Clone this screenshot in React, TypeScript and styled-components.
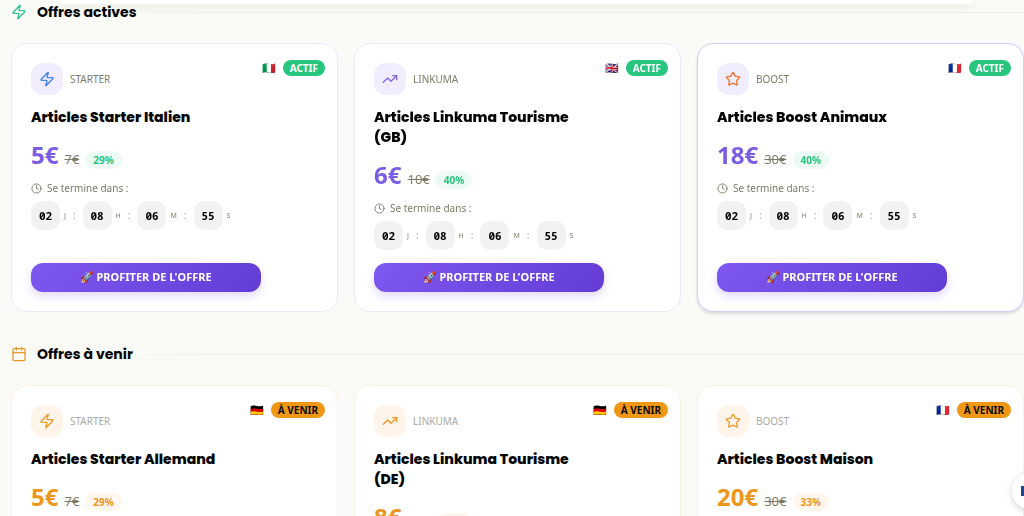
import React from "react";
import styled, { createGlobalStyle } from "styled-components";
import { Calendar, Clock, Star, TrendingUp, Zap, type LucideIcon } from "lucide-react";

const GlobalStyle = createGlobalStyle`
  *, *::before, *::after { box-sizing: border-box; }
  html { scrollbar-width: none; }
  body {
    margin: 0;
    background: #fafaf6;
    color: #050505;
    font-family: "Noto Sans", "Noto Color Emoji", sans-serif;
    font-size: 10px;
    overflow-x: hidden;
  }
`;

const headingFont = `"Poppins", "Inter", sans-serif`;

type Tone = "active" | "upcoming";

const tones = {
  active: { accent: "#7c5ce6", tint: "#f1edfe", badge: "#28c57e", badgeText: "#ffffff", pill: "#edfaf3", pillText: "#28c57e", border: "#ebe8fa", label: "#7d7b66" },
  upcoming: { accent: "#ee9619", tint: "#fff4ea", badge: "#f09716", badgeText: "#0a0a0a", pill: "#fff6ee", pillText: "#ee9619", border: "#fbf1de", label: "#aaa9a3" },
};

const NavBar = styled.nav`
  position: fixed;
  top: 0;
  left: 6%;
  right: 5%;
  height: 4px;
  background: #ffffff;
  border-radius: 0 0 16px 16px;
  box-shadow: 0 3px 8px rgba(60, 60, 40, 0.12);
`;

const Page = styled.main`
  display: flex;
  flex-direction: column;
  gap: 30px;
  padding: 0 0 32px 11px;
`;

const Section = styled.section`
  display: flex;
  flex-direction: column;
  gap: 19px;
`;

const SectionHeader = styled.header`
  display: flex;
  align-items: center;
  gap: 10px;
  height: 24px;
  &::after {
    content: "";
    flex: 1;
    height: 1px;
    background: linear-gradient(90deg, #f4f4ef, #ededea 10%, #ededea);
  }
`;

const SectionTitle = styled.h2`
  margin: 0;
  font: 700 14px/24px ${headingFont};
`;

const CardGrid = styled.div`
  display: grid;
  grid-template-columns: repeat(3, minmax(0, 1fr));
  gap: 16px;
`;

const Card = styled.article<{ $tone: Tone; $featured?: boolean }>`
  position: relative;
  display: flex;
  flex-direction: column;
  min-height: 268px;
  padding: 19px;
  background: #ffffff;
  border: 1px solid ${(p) => (p.$featured ? "#d3cbf6" : tones[p.$tone].border)};
  border-radius: 16px;
  box-shadow: ${(p) => (p.$featured ? "0 2px 3px rgba(70, 60, 120, 0.16)" : "none")};
`;

const CardBody = styled.div`
  display: flex;
  flex: 1;
  flex-direction: column;
  width: 80%;
`;

const Status = styled.div`
  position: absolute;
  top: 16px;
  right: 12px;
  display: flex;
  align-items: center;
  gap: 7px;
`;

const Flag = styled.span`
  font-size: 11px;
  line-height: 16px;
`;

const Badge = styled.span<{ $tone: Tone }>`
  padding: 0 7px;
  border-radius: 8px;
  background: ${(p) => tones[p.$tone].badge};
  color: ${(p) => tones[p.$tone].badgeText};
  font-size: 10px;
  font-weight: 700;
  line-height: 16px;
`;

const Category = styled.div<{ $tone: Tone }>`
  display: flex;
  align-items: center;
  gap: 7px;
  color: ${(p) => tones[p.$tone].label};
  font-size: 10px;
`;

const IconTile = styled.span<{ $tone: Tone; $color: string }>`
  display: grid;
  place-items: center;
  width: 32px;
  height: 32px;
  border-radius: 12px;
  background: ${(p) => tones[p.$tone].tint};
  color: ${(p) => p.$color};
`;

const CardTitle = styled.h3`
  margin: 12px 0;
  padding-right: 8px;
  font: 800 14px/20px ${headingFont};
`;

const PriceRow = styled.div`
  display: flex;
  align-items: baseline;
  gap: 6px;
  height: 31px;
  line-height: 32px;
`;

const Price = styled.strong<{ $tone: Tone }>`
  color: ${(p) => tones[p.$tone].accent};
  font-size: 24px;
  font-weight: 700;
`;

const OldPrice = styled.s`
  color: #7d7b66;
  font-size: 13px;
`;

const Discount = styled.span<{ $tone: Tone }>`
  padding: 0 8px;
  border-radius: 9px;
  background: ${(p) => tones[p.$tone].pill};
  color: ${(p) => tones[p.$tone].pillText};
  font-size: 10px;
  font-weight: 700;
  line-height: 18px;
`;

const EndsIn = styled.div`
  display: flex;
  align-items: center;
  gap: 5px;
  margin-top: 10px;
  color: #7d7b66;
  font-size: 10px;
  line-height: 16px;
`;

const Countdown = styled.div`
  display: flex;
  align-items: center;
  gap: 7px;
  margin: 5px 0 13px;
  color: #aaa9a0;
  line-height: 29px;
`;

const Unit = styled.span`
  display: flex;
  align-items: center;
  gap: 4px;
  color: #85846f;
  font-size: 7px;
`;

const Digits = styled.span`
  width: 29px;
  border-radius: 10px;
  background: #f2f2f2;
  color: #050505;
  font: 700 11px/29px "Noto Sans Mono", "DejaVu Sans Mono", monospace;
  text-align: center;
`;

const OfferButton = styled.button`
  height: 29px;
  margin-top: auto;
  padding: 0 0 1px;
  border: 0;
  border-radius: 12px;
  background: linear-gradient(135deg, #7f57f1, #633bd5);
  box-shadow: 0 4px 10px rgba(124, 92, 240, 0.24);
  color: #ffffff;
  font: 700 11px/28px "Noto Sans", "Noto Color Emoji", sans-serif;
  cursor: pointer;
`;

const FloatingButton = styled.button`
  position: fixed;
  right: -24px;
  bottom: 7px;
  display: grid;
  place-items: center;
  width: 36px;
  height: 36px;
  padding: 0;
  border: 0;
  border-radius: 50%;
  background: #ffffff;
  box-shadow: 0 2px 7px rgba(0, 0, 0, 0.18);
`;

interface Offer {
  category: string;
  icon: LucideIcon;
  color: string;
  title: string;
  flag: string;
  price: string;
  oldPrice: string;
  discount: string;
  featured?: boolean;
}

const activeOffers: Offer[] = [
  { category: "STARTER", icon: Zap, color: "#4385e8", title: "Articles Starter Italien", flag: "🇮🇹", price: "5€", oldPrice: "7€", discount: "29%" },
  { category: "LINKUMA", icon: TrendingUp, color: "#8367e0", title: "Articles Linkuma Tourisme (GB)", flag: "🇬🇧", price: "6€", oldPrice: "10€", discount: "40%" },
  { category: "BOOST", icon: Star, color: "#f0752b", title: "Articles Boost Animaux", flag: "🇫🇷", price: "18€", oldPrice: "30€", discount: "40%", featured: true },
];

const upcomingOffers: Offer[] = [
  { category: "STARTER", icon: Zap, color: "#ee9a2b", title: "Articles Starter Allemand", flag: "🇩🇪", price: "5€", oldPrice: "7€", discount: "29%" },
  { category: "LINKUMA", icon: TrendingUp, color: "#ee9a2b", title: "Articles Linkuma Tourisme (DE)", flag: "🇩🇪", price: "8€", oldPrice: "10€", discount: "20%" },
  { category: "BOOST", icon: Star, color: "#ee9a2b", title: "Articles Boost Maison", flag: "🇫🇷", price: "20€", oldPrice: "30€", discount: "33%" },
];

const remaining = [["02", "J"], ["08", "H"], ["06", "M"], ["55", "S"]];

function OfferCard({ offer, tone }: { offer: Offer; tone: Tone }) {
  const Icon = offer.icon;
  return (
    <Card $tone={tone} $featured={offer.featured}>
      <Status>
        <Flag>{offer.flag}</Flag>
        <Badge $tone={tone}>{tone === "active" ? "ACTIF" : "À VENIR"}</Badge>
      </Status>
      <CardBody>
        <Category $tone={tone}>
          <IconTile $tone={tone} $color={offer.color}><Icon size={16} /></IconTile>
          {offer.category}
        </Category>
        <CardTitle>{offer.title}</CardTitle>
        <PriceRow>
          <Price $tone={tone}>{offer.price}</Price>
          <OldPrice>{offer.oldPrice}</OldPrice>
          <Discount $tone={tone}>{offer.discount}</Discount>
        </PriceRow>
        {tone === "active" && (
          <>
            <EndsIn><Clock size={11} />Se termine dans :</EndsIn>
            <Countdown>
              {remaining.map(([value, unit], i) => (
                <React.Fragment key={unit}>
                  {i > 0 && <span>:</span>}
                  <Unit><Digits>{value}</Digits>{unit}</Unit>
                </React.Fragment>
              ))}
            </Countdown>
            <OfferButton type="button">🚀 PROFITER DE L'OFFRE</OfferButton>
          </>
        )}
      </CardBody>
    </Card>
  );
}

export default function App() {
  return (
    <>
      <GlobalStyle />
      <NavBar />
      <Page>
        <Section>
          <SectionHeader>
            <Zap size={16} color="#2fc48d" />
            <SectionTitle>Offres actives</SectionTitle>
          </SectionHeader>
          <CardGrid>
            {activeOffers.map((o) => <OfferCard key={o.category} offer={o} tone="active" />)}
          </CardGrid>
        </Section>
        <Section>
          <SectionHeader>
            <Calendar size={16} color="#ee9a2b" />
            <SectionTitle>Offres à venir</SectionTitle>
          </SectionHeader>
          <CardGrid>
            {upcomingOffers.map((o) => <OfferCard key={o.category} offer={o} tone="upcoming" />)}
          </CardGrid>
        </Section>
      </Page>
      <FloatingButton type="button" aria-label="Langue">
        <svg width="18" height="10" viewBox="0 0 18 10">
          <rect width="6" height="10" fill="#1d4587" />
          <rect x="6" width="6" height="10" fill="#ffffff" />
          <rect x="12" width="6" height="10" fill="#d8343f" />
        </svg>
      </FloatingButton>
    </>
  );
}
